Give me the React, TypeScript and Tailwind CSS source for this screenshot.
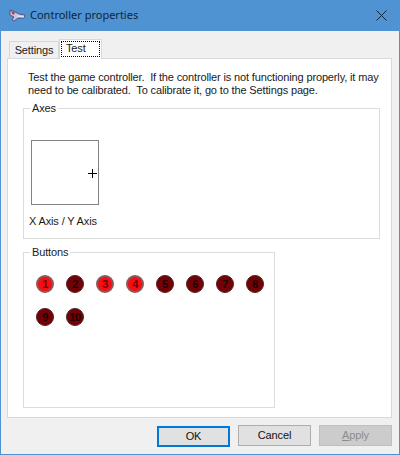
import React from "react";

const leds = [
  { n: 1, on: true },
  { n: 2, on: false },
  { n: 3, on: true },
  { n: 4, on: true },
  { n: 5, on: false },
  { n: 6, on: false },
  { n: 7, on: false },
  { n: 8, on: false },
  { n: 9, on: false },
  { n: 10, on: false },
];

function Led({ n, on }: { n: number; on: boolean }) {
  return (
    <div
      className={
        on
          ? "w-[18px] h-[18px] rounded-full flex items-center justify-center text-[11px] font-bold leading-none tracking-[-0.5px] bg-[#f80d12] border-2 border-[#8a5a5a] text-[#6a0508]"
          : "w-[18px] h-[18px] rounded-full flex items-center justify-center text-[11px] font-bold leading-none tracking-[-0.5px] bg-[#730206] border-[1.5px] border-[#4f2024] text-[#1c0002]"
      }
    >
      {n}
    </div>
  );
}

function DlgButton({ label, kind }: { label: React.ReactNode; kind?: "default" | "disabled" }) {
  let cls = "w-[73px] h-[21px] flex items-center justify-center text-[11px] tracking-[-0.14px] border bg-[#e1e1e1] border-[#adadad] text-[#111]";
  if (kind === "default") cls = "w-[73px] h-[21px] mt-px flex items-center justify-center text-[11px] tracking-[-0.14px] border-2 bg-[#e1e1e1] border-[#0078d7] text-[#111]";
  if (kind === "disabled") cls = "w-[73px] h-[21px] flex items-center justify-center text-[11px] tracking-[-0.14px] border bg-[#cccccc] border-[#bfbfbf] text-[#8c8c8c]";
  return <div className={cls}>{label}</div>;
}

export default function App() {
  return (
    <div className="w-[400px] h-[455px] flex flex-col bg-[#4f93d3] px-px pb-px font-['Liberation_Sans',Arial,sans-serif] text-[#1a1a1a] overflow-hidden">
      {/* title bar */}
      <div className="h-[31px] shrink-0 flex items-center pl-[8px] pr-[12px]">
        <svg width="17" height="13" viewBox="0 0 17 13" className="shrink-0">
          <path d="M1 1 L6 3 L10 5 L16 6 L15 9 L9 9 L5 12 L3 11 L5 8 L1 6 Z" fill="#c9c6dc" stroke="#4a3f77" strokeWidth="0.8" />
          <path d="M2 2 L6 4 L4 6 Z" fill="#a12f4e" />
          <path d="M8 7 L15 8" stroke="#f0eef8" strokeWidth="1" />
        </svg>
        <span className="ml-[4px] text-[11px] text-[#0f2438] font-['Noto_Sans',sans-serif]">Controller properties</span>
        <svg width="11" height="11" viewBox="0 0 11 11" className="ml-auto">
          <path d="M0.5 0.5 L10.5 10.5 M10.5 0.5 L0.5 10.5" stroke="#0f2438" strokeWidth="1" fill="none" />
        </svg>
      </div>

      {/* client area */}
      <div className="flex-1 bg-[#f0f0f0] flex flex-col px-[6px]">
        <div className="h-[27px] shrink-0 flex items-end pl-[2px] text-[11px] tracking-[-0.14px]">
          <div className="w-[50px] h-[18px] mb-[-1px] flex items-center justify-center border border-b-0 border-[#d9d9d9] bg-[#f0f0f0]">
            Settings
          </div>
          <div className="relative z-10 w-[43px] h-[20px] mb-[-1px] pt-[1px] pl-[1px] border border-b-0 border-[#d9d9d9] bg-white">
            <div className="w-[39px] h-[16px] pl-[4px] leading-[13px] border border-dotted border-black">Test</div>
          </div>
        </div>

        {/* tab page */}
        <div className="h-[360px] w-[385px] shrink-0 border border-[#d9d9d9] bg-white px-[15px] pt-[12px] text-[11px] tracking-[-0.14px]">
          <p className="pl-[5px] leading-[13px] whitespace-pre">
            {"Test the game controller.  If the controller is not functioning properly, it may\nneed to be calibrated.  To calibrate it, go to the Settings page."}
          </p>

          <fieldset className="mt-[5px] w-[357px] h-[137px] border border-[#dcdcdc] pl-[7px]">
            <legend className="-ml-[1px] px-[2px] leading-[13px]">Axes</legend>
            <div className="relative mt-[25px] w-[68px] h-[65px] border border-[#828282]">
              <svg width="9" height="9" viewBox="0 0 9 9" className="absolute left-[56px] top-[28px]">
                <path d="M4.5 0 V9 M0 4.5 H9" stroke="#000" strokeWidth="1" />
              </svg>
            </div>
            <div className="mt-[10px] -ml-[2px] leading-[13px]">X Axis / Y Axis</div>
          </fieldset>

          <fieldset className="mt-[7px] w-[252px] h-[162px] border border-[#dcdcdc] pl-[12px]">
            <legend className="-ml-[6px] px-[2px] leading-[13px]">Buttons</legend>
            <div className="mt-[16px] grid grid-cols-[repeat(8,18px)] gap-x-[12px] gap-y-[15px]">
              {leds.map((l) => (
                <Led key={l.n} n={l.n} on={l.on} />
              ))}
            </div>
          </fieldset>
        </div>

        {/* dialog buttons */}
        <div className="flex-1 flex justify-end items-start gap-[8px] pt-[7px] pr-[1px]">
          <DlgButton label="OK" kind="default" />
          <DlgButton label="Cancel" />
          <DlgButton label={<><span className="underline">A</span>pply</>} kind="disabled" />
        </div>
      </div>
    </div>
  );
}
